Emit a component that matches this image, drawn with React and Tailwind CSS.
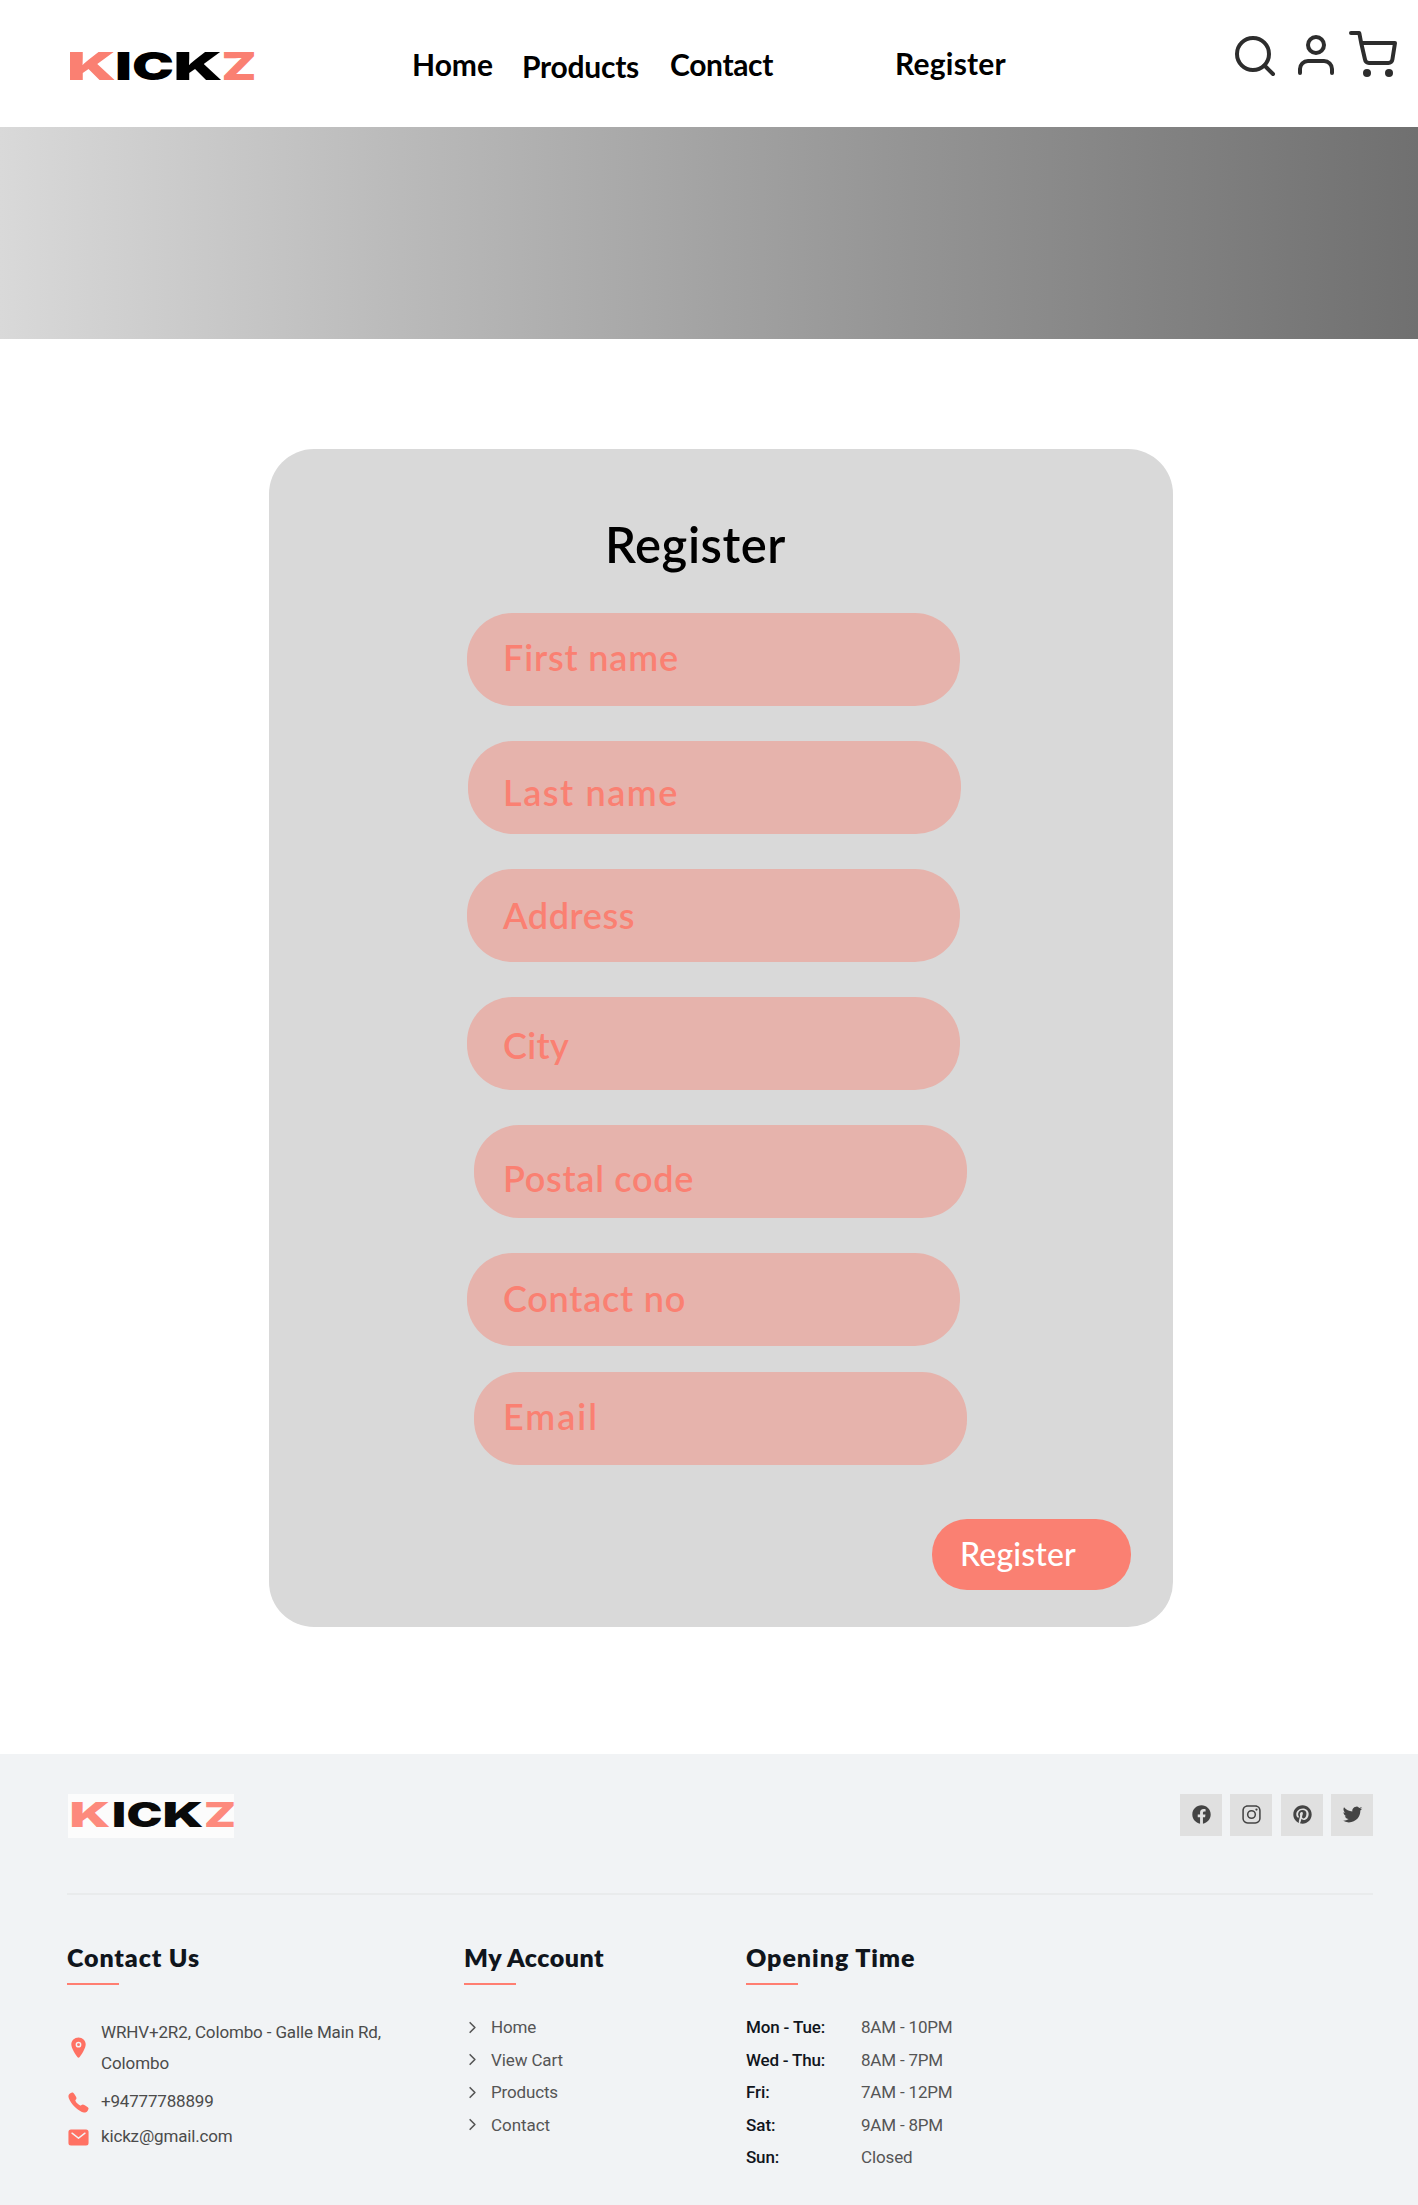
import { useLayoutEffect, useRef } from "react";
import {
  IoLogoFacebook, IoLogoInstagram, IoLogoPinterest, IoLogoTwitter,
  IoLocation, IoCall, IoMail, IoChevronForward,
} from "react-icons/io5";

/* Text whose letter spacing is adjusted so that it fills a given width. */
function Fit({ w, className = "", children }) {
  const ref = useRef(null);
  useLayoutEffect(() => {
    const el = ref.current;
    el.style.letterSpacing = "0px";
    const natural = el.getBoundingClientRect().width;
    el.style.letterSpacing = `${(w - natural) / children.length}px`;
  }, [w, children]);
  return (
    <span ref={ref} className={`block w-max whitespace-nowrap ${className}`}>
      {children}
    </span>
  );
}

/* Wordmark: every letter is [character, left, width, colour]. */
function Logo({ letters, size, baseline, className }) {
  return (
    <svg className={`overflow-visible ${className}`} aria-label="KICKZ">
      {letters.map(([ch, x, w, fill], i) => (
        <text key={i} x={x} y={baseline} textLength={w} lengthAdjust="spacingAndGlyphs"
          fontFamily="Inter, sans-serif" fontWeight="900" fontSize={size} fill={fill}>
          {ch}
        </text>
      ))}
    </svg>
  );
}

const topLogo = [
  ["K", 2, 49, "#fa8072"], ["I", 50, 17, "#000"], ["C", 67, 42, "#000"],
  ["K", 108.5, 49, "#000"], ["Z", 156.5, 35, "#fa8072"],
];
const footLogo = [
  ["K", 1.5, 41, "#fd8a7d"], ["I", 44, 14, "#0a0a0a"], ["C", 58.5, 36, "#0a0a0a"],
  ["K", 94.5, 41, "#0a0a0a"], ["Z", 136, 32, "#fd8a7d"],
];

const fields = [
  { label: "First name", w: 176, box: "ml-[198px]", text: "ml-[36px] mt-[21px]" },
  { label: "Last name", w: 176, box: "ml-[199px] mt-[35px]", text: "ml-[35px] mt-[28px]" },
  { label: "Address", w: 132, box: "ml-[198px] mt-[35px]", text: "ml-[36px] mt-[23px]" },
  { label: "City", w: 66, box: "ml-[198px] mt-[35px]", text: "ml-[36px] mt-[25px]" },
  { label: "Postal code", w: 191, box: "ml-[205px] mt-[35px]", text: "ml-[29px] mt-[30px]" },
  { label: "Contact no", w: 183, box: "ml-[198px] mt-[35px]", text: "ml-[36px] mt-[22px]" },
  { label: "Email", w: 96, box: "ml-[205px] mt-[26px]", text: "ml-[29px] mt-[21px]" },
];

const links = [["Home", 45], ["View Cart", 72], ["Products", 67], ["Contact", 59]];
const hours = [
  ["Mon - Tue:", 79, "8AM - 10PM", 91.5],
  ["Wed - Thu:", 79, "8AM - 7PM", 82],
  ["Fri:", 23.5, "7AM - 12PM", 91.5],
  ["Sat:", 29.5, "9AM - 8PM", 82],
  ["Sun:", 33, "Closed", 51.5],
];

function Heading({ w, children }) {
  return (
    <>
      <h3 className="h-[30px] font-['Lato'] text-[25px] leading-[31px] font-extrabold text-[#10151c]">
        <Fit w={w}>{children}</Fit>
      </h3>
      <div className="mt-[11px] h-[2px] w-[52px] bg-[#ff7e71]" />
    </>
  );
}

function Header() {
  return (
    <header className="flex h-[127px] bg-white font-['Lato'] text-[30px] leading-[36px] font-bold text-black">
      <Logo className="mt-[38px] ml-[65px] h-[56px] w-[194px]" letters={topLogo} size={38.5} baseline={42} />
      <Fit w={81} className="mt-[46px] ml-[153px]">Home</Fit>
      <Fit w={117} className="mt-[48px] ml-[29px]">Products</Fit>
      <Fit w={103} className="mt-[46px] ml-[31px]">Contact</Fit>
      <Fit w={111} className="mt-[45px] ml-[122px]">Register</Fit>
      <svg className="mt-5 ml-[224px] h-[60px] w-[170px]" viewBox="1230 20 170 60" fill="none" stroke="#2d2d2d" strokeWidth="4" strokeLinecap="round" strokeLinejoin="round">
        <circle cx="1253" cy="54" r="16" />
        <path d="M1264.5 65.5 1273 74" />
        <circle cx="1316" cy="45" r="8" />
        <path d="M1300 73v-4a8 8 0 0 1 8-8h16a8 8 0 0 1 8 8v4" />
        <path d="M1351 33h8.3l1.9 10M1361.200 43h33.800l-2.600 16.500a4 4 0 0 1-4 3.500h-19.400a4 4 0 0 1-4-3.500L1361.200 43" />
        <circle cx="1367" cy="73" r="4" fill="#2d2d2d" stroke="none" />
        <circle cx="1389" cy="73" r="4" fill="#2d2d2d" stroke="none" />
      </svg>
    </header>
  );
}

function RegisterCard() {
  return (
    <main className="mt-[110px] ml-[269px] flex h-[1178px] w-[904px] flex-col rounded-[45px] bg-[#d9d9d9] font-['Lato']">
      <h1 className="mt-[65px] ml-[336px] h-[59px] text-[49px] leading-[60px] font-semibold text-black">
        <Fit w={181}>Register</Fit>
      </h1>
      <form className="mt-[40px]">
        {fields.map((f) => (
          <div key={f.label} className={`flex h-[93px] w-[493px] rounded-[45px] bg-[#e6b3ac] text-[36px] leading-[46px] font-semibold text-[#fa8072] ${f.box}`}>
            <Fit w={f.w} className={f.text}>{f.label}</Fit>
          </div>
        ))}
        <button type="button" className="mt-[54px] ml-[663px] flex h-[71px] w-[199px] rounded-[35px] bg-[#fa8072] text-[32px] leading-[40px] font-medium text-white">
          <Fit w={116} className="mt-[15px] ml-[28px]">Register</Fit>
        </button>
      </form>
    </main>
  );
}

function Footer() {
  return (
    <footer className="mt-[127px] h-[451px] bg-[#f1f3f5] pt-[40px] pr-[45px] pl-[67px] font-['Roboto'] text-[17px] text-[#555]">
      <div className="flex h-[99px] justify-between">
        <Logo className="ml-px h-[44px] w-[166px] bg-[#fcfcfc]" letters={footLogo} size={33.500} baseline={32.5} />
        <div className="flex gap-[8.3px] text-[#444]">
          {[IoLogoFacebook, IoLogoInstagram, IoLogoPinterest, IoLogoTwitter].map((Icon, i) => (
            <a key={i} className="flex h-[42px] w-[42px] items-center justify-center bg-[#e0e0e0]">
              <Icon className="mb-px ml-px size-[21px]" />
            </a>
          ))}
        </div>
      </div>
      <div className="h-[2px] bg-[#e9ebec]" />
      <div className="flex pt-[47px]">
        <section className="w-[397px]">
          <Heading w={133}>Contact Us</Heading>
          <div className="mt-[32px] flex items-center text-[#4b4b4b]">
            <IoLocation className="mr-[11px] mb-px size-[23px] text-[#ff7163]" />
            <div className="leading-[30.500px]">
              <Fit w={280}>WRHV+2R2, Colombo - Galle Main Rd,</Fit>
              <Fit w={68}>Colombo</Fit>
            </div>
          </div>
          <div className="mt-[9px] flex h-[30px] items-center text-[#4b4b4b]">
            <IoCall className="mr-[11px] size-[23px] text-[#ff7163]" />
            <Fit w={112.5}>+94777788899</Fit>
          </div>
          <div className="mt-[5px] flex h-[30px] items-center text-[#4b4b4b]">
            <IoMail className="mr-[11px] size-[23px] text-[#ff7163]" />
            <Fit w={131.5}>kickz@gmail.com</Fit>
          </div>
        </section>
        <section className="w-[282px]">
          <Heading w={140}>My Account</Heading>
          <ul className="mt-[26.400px]">
            {links.map(([t, w]) => (
              <li key={t} className="flex h-[32.600px] items-center">
                <IoChevronForward className="mr-[10px] mb-px size-[17px]" />
                <Fit w={w}>{t}</Fit>
              </li>
            ))}
          </ul>
        </section>
        <section>
          <Heading w={169.5}>Opening Time</Heading>
          <ul className="mt-[26.400px]">
            {hours.map(([d, dw, h, hw]) => (
              <li key={d} className="flex h-[32.600px] items-center">
                <div className="w-[115px] font-medium text-[#10151c]"><Fit w={dw}>{d}</Fit></div>
                <Fit w={hw}>{h}</Fit>
              </li>
            ))}
          </ul>
        </section>
      </div>
    </footer>
  );
}

export default function App() {
  return (
    <div className="h-[2205px] w-[1418px] overflow-hidden bg-white">
      <Header />
      <div className="h-[212px] bg-linear-to-r from-[#d9d9d9] to-[#707070]" />
      <RegisterCard />
      <Footer />
    </div>
  );
}
